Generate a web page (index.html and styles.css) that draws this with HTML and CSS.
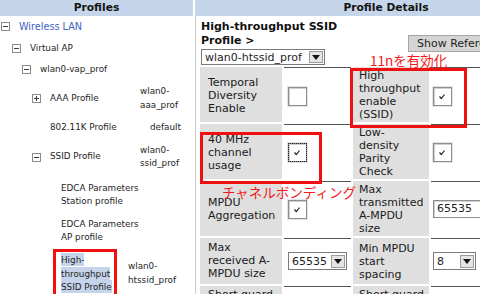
FILE: index.html
```html
<!DOCTYPE html>
<html lang="en">
<head>
  <meta charset="UTF-8" />
  <title>Profiles</title>
  <link rel="stylesheet" href="styles.css">
</head>
<body>
  <div class="page">
    <div class="left">
      <div class="head">Profiles</div>
      <div class="tree">
        <div class="node lv1">
          <span class="tw"><svg class="tg" viewBox="0 0 9 9"><rect x=".5" y=".5" width="8" height="8" fill="#fff" stroke="#8c8c8c"/><path d="M2 4.5h5" stroke="#3a3a3a"/></svg></span>
          <span class="name link">Wireless LAN</span>
        </div>
        <div class="node lv2">
          <span class="tw"><svg class="tg" viewBox="0 0 9 9"><rect x=".5" y=".5" width="8" height="8" fill="#fff" stroke="#8c8c8c"/><path d="M2 4.5h5" stroke="#3a3a3a"/></svg></span>
          <span class="name">Virtual AP</span>
        </div>
        <div class="node lv3">
          <span class="tw"><svg class="tg" viewBox="0 0 9 9"><rect x=".5" y=".5" width="8" height="8" fill="#fff" stroke="#8c8c8c"/><path d="M2 4.5h5" stroke="#3a3a3a"/></svg></span>
          <span class="name">wlan0-vap_prof</span>
        </div>
        <div class="node lv4">
          <span class="tw"><svg class="tg" viewBox="0 0 9 9"><rect x=".5" y=".5" width="8" height="8" fill="#fff" stroke="#8c8c8c"/><path d="M2 4.5h5M4.5 2v5" stroke="#3a3a3a"/></svg></span>
          <span class="name">AAA Profile</span>
          <span class="val">wlan0-aaa_prof</span>
        </div>
        <div class="node lv4">
          <span class="tw"></span>
          <span class="name">802.11K Profile</span>
          <span class="val single">default</span>
        </div>
        <div class="node lv4">
          <span class="tw"><svg class="tg" viewBox="0 0 9 9"><rect x=".5" y=".5" width="8" height="8" fill="#fff" stroke="#8c8c8c"/><path d="M2 4.5h5" stroke="#3a3a3a"/></svg></span>
          <span class="name">SSID Profile</span>
          <span class="val">wlan0-ssid_prof</span>
        </div>
        <div class="children">
          <div class="node lv5">
            <span class="name">EDCA Parameters Station profile</span>
          </div>
          <div class="node lv5">
            <span class="name">EDCA Parameters AP profile</span>
          </div>
          <div class="node lv5">
            <span class="name marked"><span class="picked">High-throughput SSID Profile</span></span>
            <span class="val">wlan0-htssid_prof</span>
          </div>
        </div>
      </div>
    </div>

    <div class="right">
      <div class="head">Profile Details</div>
      <div class="pane">
        <div class="top">
          <div class="titlebox">
            <h2>High-throughput SSID Profile &gt;</h2>
            <div class="sel wide"><span>wlan0-htssid_prof</span><span class="arr"></span></div>
          </div>
          <div class="btn">Show Reference</div>
        </div>

        <table class="grid">
          <tr class="r1">
            <td class="lbl">Temporal Diversity Enable</td>
            <td class="inp"><span class="cb"></span></td>
            <td class="lbl r">High throughput enable (SSID)</td>
            <td class="inp last"><span class="cb"><svg viewBox="0 0 17 17"><path d="M5.5 8.5l1.8 2 3.2-4" fill="none" stroke="#222" stroke-width="1.2"/></svg></span></td>
          </tr>
          <tr>
            <td class="lbl">40 MHz channel usage</td>
            <td class="inp"><span class="cb focus"><svg viewBox="0 0 17 17"><path d="M5.5 8.5l1.8 2 3.2-4" fill="none" stroke="#222" stroke-width="1.2"/></svg></span></td>
            <td class="lbl r">Low-density Parity Check</td>
            <td class="inp last"><span class="cb"><svg viewBox="0 0 17 17"><path d="M5.5 8.5l1.8 2 3.2-4" fill="none" stroke="#222" stroke-width="1.2"/></svg></span></td>
          </tr>
          <tr>
            <td class="lbl">MPDU Aggregation</td>
            <td class="inp"><span class="cb"><svg viewBox="0 0 17 17"><path d="M5.5 8.5l1.8 2 3.2-4" fill="none" stroke="#222" stroke-width="1.2"/></svg></span></td>
            <td class="lbl r">Max transmitted A-MPDU size</td>
            <td class="inp last"><div class="txt">65535</div></td>
          </tr>
          <tr class="r4">
            <td class="lbl">Max received A-MPDU size</td>
            <td class="inp"><div class="sel mid"><span>65535</span><span class="arr"></span></div></td>
            <td class="lbl r">Min MPDU start spacing</td>
            <td class="inp last"><div class="sel small"><span>8</span><span class="arr"></span></div></td>
          </tr>
          <tr>
            <td class="lbl">Short guard interval in 20 MHz mode</td>
            <td class="inp"><span class="cb"></span></td>
            <td class="lbl r">Short guard interval in 40 MHz mode</td>
            <td class="inp last"><span class="cb"></span></td>
          </tr>
        </table>

        <div class="note n1">11nを有効化</div>
        <div class="redbox b1"></div>
        <div class="redbox b2"></div>
        <div class="note n2">チャネルボンディング</div>
      </div>
    </div>
  </div>
</body>
</html>
```

FILE: styles.css
```css
body {
  margin: 0;
  font-family: "DejaVu Sans", Verdana, sans-serif;
  color: #1e1e1e;
  background: #fff;
  overflow: hidden;
}

.page {
  display: flex;
  width: 577px;
  height: 294px;
}

.left {
  width: 193px;
  flex: none;
}

.right {
  width: 382px;
  margin-left: 2px;
  flex: none;
}

.head {
  height: 16px;
  background: #c6d6ea;
  font-size: 10.7px;
  font-weight: bold;
  line-height: 16px;
  text-align: center;
  color: #141414;
}

/* tree */
.tree {
  font-size: 8.8px;
  line-height: 13.5px;
}

.node {
  display: flex;
  align-items: center;
  padding: 4px 0;
}

.lv1 { padding-left: 1px; }
.lv2 { padding-left: 12px; }
.lv3 { padding-left: 22px; }
.lv4 { padding-left: 32px; padding-top: 4.5px; padding-bottom: 4.5px; }
.lv5 { padding-left: 61px; padding-top: 4.5px; padding-bottom: 4.5px; }

.children {
  margin-top: 2px;
}

.tw {
  width: 18px;
  flex: none;
  display: flex;
}

.tg {
  width: 9px;
  height: 9px;
}

.link {
  color: #4262c4;
  font-size: 9.7px;
}

.lv4 .name {
  width: 90px;
  flex: none;
}

.lv5 .name {
  width: 90px;
  flex: none;
}

.lv5 .name.marked {
  width: 67px;
  position: relative;
}

.val {
  width: 42px;
}

.lv5 .val {
  width: 56px;
}

.val.single {
  padding-left: 10px;
}

.picked {
  background: #c5d4ea;
  padding: 1.5px 0;
}

.marked::after {
  content: "";
  position: absolute;
  left: -8px;
  right: 11px;
  top: -5px;
  bottom: -6px;
  border: 3px solid #f01010;
}

/* details */
.pane {
  position: relative;
  border-left: 1px solid #c8c8c8;
  height: 278px;
}

.top {
  display: flex;
  align-items: flex-start;
  padding: 4px 0 0 5px;
}

.titlebox {
  width: 207px;
  flex: none;
}

.titlebox h2 {
  margin: 0;
  max-width: 160px;
  font-size: 11px;
  line-height: 14px;
  color: #111;
}

.btn {
  margin-top: 15px;
  height: 15px;
  padding: 0 8px;
  background: #d4d4d4;
  border: 1px solid #a6a6a6;
  font-size: 11px;
  line-height: 15px;
  white-space: nowrap;
}

.sel {
  display: flex;
  align-items: center;
  justify-content: space-between;
  box-sizing: border-box;
  height: 18px;
  padding: 0 1px 0 3px;
  border: 1px solid #7a7a7a;
  background: #fff;
  font-size: 11px;
}

.sel.wide {
  width: 124px;
  height: 16px;
  margin-top: 1px;
}

.sel.mid { width: 59px; }
.sel.small { width: 43px; }

.arr {
  width: 14px;
  height: 13px;
  box-sizing: border-box;
  border: 1px solid #9a9a9a;
  background: #e4e4e4;
  display: flex;
  align-items: center;
  justify-content: center;
}

.sel.wide .arr {
  height: 12px;
}

.arr::before {
  content: "";
  border-left: 4px solid transparent;
  border-right: 4px solid transparent;
  border-top: 5px solid #111;
}

.grid {
  border-collapse: separate;
  border-spacing: 2px;
  margin-left: 2px;
  font-size: 11px;
  line-height: 13px;
}

.grid td {
  vertical-align: middle;
}

.lbl {
  width: 68px;
  padding: 2px 6px 1px 8px;
  background: #dfdfdf;
  color: #1a1a1a;
}

.lbl.r {
  width: 65.6px;
  padding: 2px 4.4px 1px 6px;
}

.inp {
  width: 58px;
  padding: 1px 4px;
  border-top: 1px solid #555;
  background: #fff;
}

.inp.last {
  width: 110px;
  padding-left: 2px;
}

.r1 td {
  padding-top: 5px;
  padding-bottom: 3px;
}

.r4 td {
  padding-top: 3px;
  padding-bottom: 4px;
}

.cb {
  display: block;
  width: 17px;
  height: 17px;
  border: 1px solid #8e8e8e;
  background: #fff;
  box-shadow: 0 0 0 1px #e4e4e4, inset 1px 1px 0 #cfcfcf;
}

.cb svg {
  display: block;
  width: 17px;
  height: 17px;
}

.cb.focus {
  outline: 1px dotted #222;
  outline-offset: -1px;
}

.txt {
  width: 70px;
  height: 16px;
  padding-left: 3px;
  border: 1px solid #8e8e8e;
  box-shadow: inset 1px 1px 0 #d0d0d0;
  line-height: 16px;
}

/* red annotations */
.note {
  position: absolute;
  color: #f21a1a;
  font-family: "Noto Sans CJK JP", sans-serif;
  font-size: 13.5px;
  line-height: 16px;
  white-space: nowrap;
}

.n1 { left: 174px; top: 36px; }
.n2 { left: 26px; top: 168px; }

.redbox {
  position: absolute;
  box-sizing: border-box;
  border: 3px solid #f01010;
}

.b1 { left: 154px; top: 52px; width: 117px; height: 60px; }
.b2 { left: 4px; top: 116px; width: 122px; height: 52px; }
```
